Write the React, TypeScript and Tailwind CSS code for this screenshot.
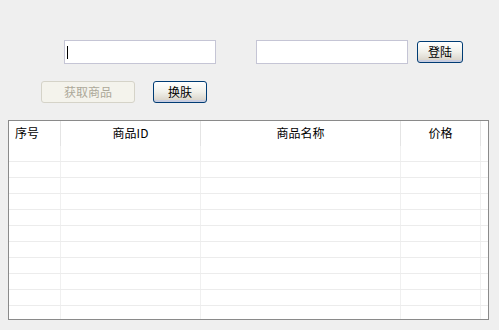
import React from "react";

const font = { fontFamily: '"Noto Sans CJK SC", "Liberation Sans", sans-serif' };

const cols = [
  { key: "idx", label: "序号", w: "w-[52px]", align: "justify-start pl-[6px]" },
  { key: "id", label: "商品ID", w: "w-[140px]", align: "justify-center" },
  { key: "name", label: "商品名称", w: "w-[200px]", align: "justify-center" },
  { key: "price", label: "价格", w: "w-[80px]", align: "justify-center" },
];

function XpButton({ children, className = "" }: { children: React.ReactNode; className?: string }) {
  return (
    <button
      className={`h-[22px] rounded-[3px] border border-[#003c74] bg-gradient-to-b from-[#ffffff] via-[#f0f0ea] to-[#d6d0c5] text-[12px] leading-none text-black shadow-[inset_0_-2px_0_#c8cde0] ${className}`}
    >
      {children}
    </button>
  );
}

export default function App() {
  const rows = Array.from({ length: 11 });
  return (
    <div className="w-[499px] h-[330px] bg-[#efefef] overflow-hidden text-black" style={font}>
      <div className="flex items-center pt-[40px] pl-[64px]">
        <div className="relative w-[152px] h-[24px] border border-[#c5c5d5] bg-white">
          <div className="absolute left-[2px] top-[5px] w-px h-[13px] bg-black" />
        </div>
        <div className="ml-[40px] w-[152px] h-[24px] border border-[#c5c5d5] bg-white" />
        <XpButton className="ml-[9px] w-[46px]">登陆</XpButton>
      </div>

      <div className="flex items-center mt-[17px] pl-[41px]">
        <button className="h-[22px] w-[94px] rounded-[3px] border border-[#d5d3c8] bg-[#f4f3ec] text-[12px] leading-none text-[#aca899]">
          获取商品
        </button>
        <XpButton className="ml-[18px] w-[54px]">换肤</XpButton>
      </div>

      <div className="mt-[17px] ml-[8px] w-[481px] h-[200px] border border-[#8a8a8a] bg-white overflow-hidden flex flex-col">
        <div className="flex h-[25px] shrink-0">
          {cols.map((c) => (
            <div
              key={c.key}
              className={`${c.w} flex items-center ${c.align} border-r border-[#e4e4e4] text-[12px] pb-[2px]`}
            >
              {c.label}
            </div>
          ))}
          <div className="w-[7px]" />
        </div>
        {rows.map((_, i) => (
          <div key={i} className="flex h-[16px] shrink-0 border-b border-[#ececec]">
            {cols.map((c) => (
              <div key={c.key} className={`${c.w} border-r border-[#f0f0f0]`} />
            ))}
            <div className="w-[7px]" />
          </div>
        ))}
      </div>
    </div>
  );
}
